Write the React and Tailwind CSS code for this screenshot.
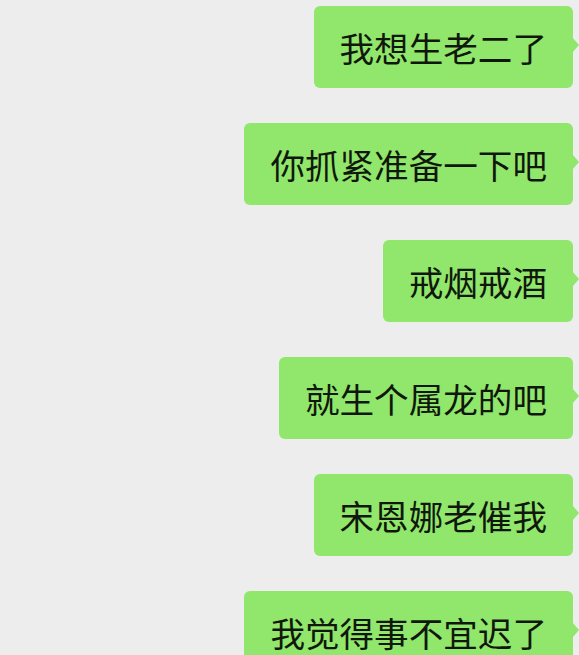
import React from 'react';

const messages = [
  '我想生老二了',
  '你抓紧准备一下吧',
  '戒烟戒酒',
  '就生个属龙的吧',
  '宋恩娜老催我',
  '我觉得事不宜迟了',
];

function Bubble({ text }) {
  return (
    <div className="relative rounded-[6px] bg-[#91e66c] px-[26px] py-[20px] text-[34.6px] leading-[42px] text-[#10180c]">
      {text}
      {/* tail */}
      <span className="absolute right-[-6px] top-[31px] h-0 w-0 border-y-[8px] border-l-[7px] border-y-transparent border-l-[#91e66c]" />
    </div>
  );
}

export default function App() {
  return (
    <div
      className="h-[655px] w-[579px] overflow-hidden bg-[#ededed]"
      style={{ fontFamily: '"Noto Sans CJK SC", "Noto Sans", sans-serif' }}
    >
      <div className="flex flex-col items-end gap-[35px] pr-[6px] pt-[6px]">
        {messages.map((m) => (
          <Bubble key={m} text={m} />
        ))}
      </div>
    </div>
  );
}
